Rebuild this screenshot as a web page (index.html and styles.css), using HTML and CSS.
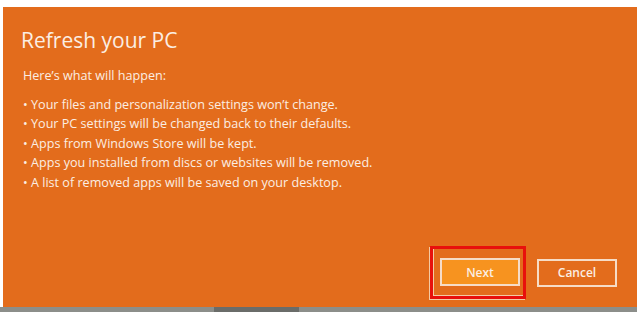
FILE: index.html
```html
<!DOCTYPE html>
<html>
<head>
<meta charset="utf-8">
<link rel="stylesheet" href="styles.css">
</head>
<body>
<div class="screen">
  <div class="dialog">
    <h1 class="title">Refresh your PC</h1>
    <p class="intro">Here’s what will happen:</p>
    <ul class="list">
      <li>Your files and personalization settings won’t change.</li>
      <li>Your PC settings will be changed back to their defaults.</li>
      <li>Apps from Windows Store will be kept.</li>
      <li>Apps you installed from discs or websites will be removed.</li>
      <li>A list of removed apps will be saved on your desktop.</li>
    </ul>
    <div class="actions">
      <div class="focus-box">
        <button class="btn btn-primary">Next</button>
      </div>
      <button class="btn">Cancel</button>
    </div>
  </div>
  <div class="taskbar">
    <div class="taskbar-seg"></div>
  </div>
</div>
</body>
</html>
```

FILE: styles.css
```css
html, body {
  margin: 0;
  padding: 0;
  background: #ffffff;
}
body {
  width: 637px;
  height: 312px;
  overflow: hidden;
  font-family: "Open Sans", "Noto Sans", sans-serif;
}
.screen {
  display: flex;
  flex-direction: column;
  height: 312px;
  padding: 7px 0 0 3px;
  box-sizing: border-box;
}
.dialog {
  flex: 1;
  background: #e36c1c;
  color: #fbeee3;
  display: flex;
  flex-direction: column;
  padding: 19px 20px 8px 20px;
}
.title {
  margin: 0 0 0 -2px;
  font-size: 21px;
  line-height: 28px;
  font-weight: 400;
  color: #fbeee3;
}
.intro {
  margin: 12px 0 0 0;
  font-size: 12.6px;
  line-height: 19.5px;
}
.list {
  list-style: none;
  margin: 9px 0 0 0;
  padding: 0;
  font-size: 12.6px;
  line-height: 19.5px;
}
.list li::before {
  content: "• ";
}
.actions {
  margin-top: auto;
  display: flex;
  justify-content: flex-end;
  align-items: center;
  gap: 11px;
}
.focus-box {
  display: flex;
  padding: 9px 3px 10px 7px;
  border: 3px solid #e8100c;
  box-shadow: -1px 1px 0 0 #f4c9a4, inset 1px -1px 0 0 #f4c9a4;
}
.btn {
  width: 80px;
  height: 28px;
  box-sizing: border-box;
  border: 2px solid #f6dcc6;
  background: #e36c1c;
  color: #fbeee3;
  font-family: "Open Sans", "Noto Sans", sans-serif;
  font-weight: 600;
  font-size: 12px;
  padding: 0;
}
.btn-primary {
  background: #f7931f;
}
.taskbar {
  height: 5px;
  background: #8c8e8a;
  margin-left: -3px;
  display: flex;
}
.taskbar-seg {
  margin-left: 214px;
  width: 85px;
  background: #6a6c69;
}
```
